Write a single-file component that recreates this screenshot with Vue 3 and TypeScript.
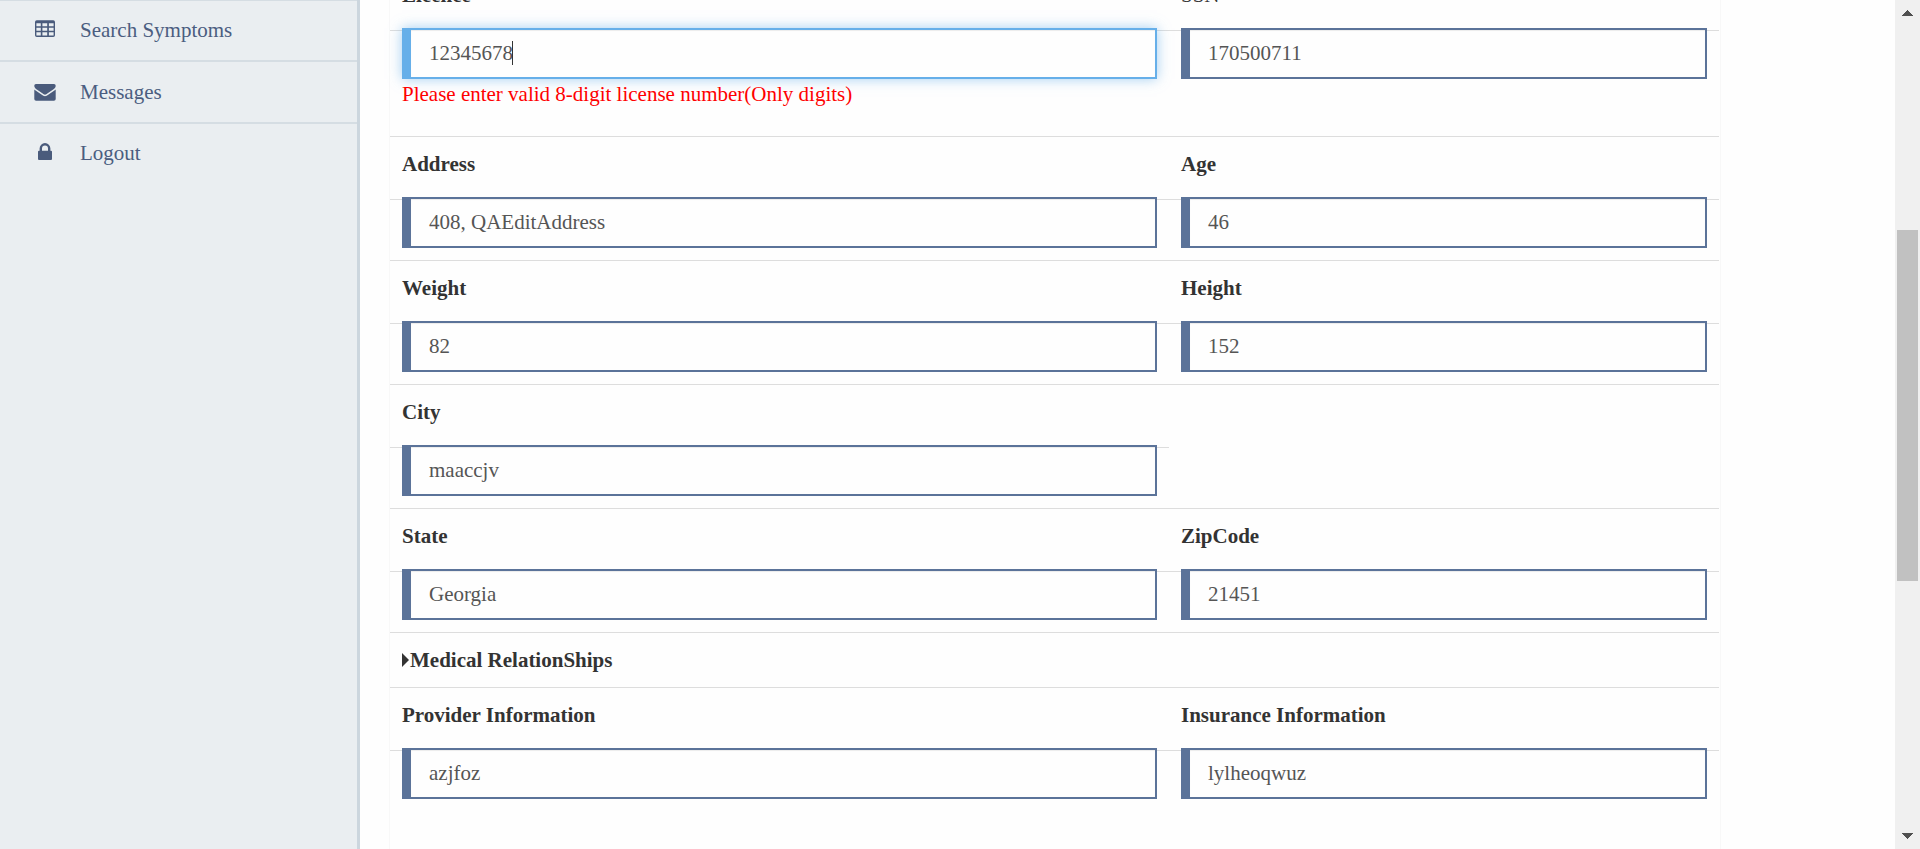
<script setup lang="ts">
interface Field {
  label: string
  value: string
  light?: boolean
  active?: boolean
  error?: string
}

interface Row {
  id: string
  fields: Field[]
  heading?: string
}

const rows: Row[] = [
  {
    id: 'licence',
    fields: [
      {
        label: 'Licence',
        value: '12345678',
        active: true,
        error: 'Please enter valid 8-digit license number(Only digits)',
      },
      { label: 'SSN', value: '170500711', light: true },
    ],
  },
  { id: 'address', fields: [{ label: 'Address', value: '408, QAEditAddress' }, { label: 'Age', value: '46' }] },
  { id: 'weight', fields: [{ label: 'Weight', value: '82' }, { label: 'Height', value: '152' }] },
  { id: 'city', fields: [{ label: 'City', value: 'maaccjv' }] },
  { id: 'state', fields: [{ label: 'State', value: 'Georgia' }, { label: 'ZipCode', value: '21451' }] },
  { id: 'medical', fields: [], heading: 'Medical RelationShips' },
  {
    id: 'provider',
    fields: [
      { label: 'Provider Information', value: 'azjfoz' },
      { label: 'Insurance Information', value: 'lylheoqwuz' },
    ],
  },
]
</script>

<template>
  <div class="page">
    <nav class="sidebar">
      <a class="item first">
        <svg class="icon" viewBox="0 0 22 20">
          <path
            fill-rule="evenodd"
            d="M2.800 1.300h16.400a1.800 1.800 0 0 1 1.800 1.800v13.200a1.800 1.800 0 0 1-1.800 1.800H2.800A1.800 1.800 0 0 1 1 16.300V3.100a1.800 1.800 0 0 1 1.800-1.800zM2.400 4.300v2.900h4.400V4.300zM8.400 4.300v2.900h4.800V4.300zM14.900 4.300v2.900h4.700V4.300zM2.400 8.700v3h4.400v-3zM8.400 8.700v3h4.800v-3zM14.900 8.700v3h4.700v-3zM2.400 13.200v3.400h4.400v-3.400zM8.400 13.200v3.400h4.800v-3.400zM14.900 13.200v3.400h4.700v-3.400z"
          />
        </svg>
        <span>Search Symptoms</span>
      </a>
      <a class="item">
        <svg class="icon" viewBox="0 -1 22 20">
          <path d="M2 2h18a1.700 1.700 0 0 1 1.700 1.700c0 1.600-1.200 2.900-2.500 3.800l-5.900 4.100c-.7.5-1.500 1.100-2.300 1.100s-1.600-.6-2.300-1.100L2.800 7.500C1.700 6.700.3 5.200.3 3.900.3 2.800.9 2 2 2z" />
          <path d="M.3 7.400c.4.4.8.8 1.300 1.100l6.200 4.300c1 .7 2 1.400 3.200 1.400s2.200-.7 3.200-1.400l6.200-4.300c.5-.3.9-.7 1.300-1.100v9.600a1.800 1.800 0 0 1-1.800 1.800H2.100A1.800 1.800 0 0 1 .3 17z" />
        </svg>
        <span>Messages</span>
      </a>
      <a class="item last">
        <svg class="icon" viewBox="0 0 22 20">
          <path
            fill-rule="evenodd"
            d="M5.600 8.800V6.500a5.400 5.400 0 0 1 10.800 0v2.300h.6q1 0 1 1v7.200q0 1-1 1H5q-1 0-1-1V9.800q0-1 1-1zM8 8.800h6V6.500a3 3 0 0 0-6 0z"
          />
        </svg>
        <span>Logout</span>
      </a>
    </nav>

    <main class="content">
      <div class="sheet">
        <template v-for="row in rows" :key="row.id">
          <div v-if="row.heading" class="heading"><i class="caret-right"></i>{{ row.heading }}</div>
          <template v-else>
            <div class="row labels">
              <div v-for="f in row.fields" :key="f.label" class="label" :class="{ light: f.light }">{{ f.label }}</div>
            </div>
            <div class="row inputs" :class="{ tall: row.fields.some((f) => f.error) }">
              <div v-for="f in row.fields" :key="f.label" class="cell">
                <div class="field" :class="{ active: f.active }">
                  <span>{{ f.value }}</span><i v-if="f.active" class="cursor"></i>
                </div>
                <div v-if="f.error" class="error">{{ f.error }}</div>
              </div>
            </div>
          </template>
        </template>
      </div>
    </main>

    <div class="scrollbar">
      <svg class="arrow" viewBox="0 0 11 6" shape-rendering="crispEdges"><path d="M5 0h1v1h1v1h1v1h1v1h1v1h1v1H0V5h1V4h1V3h1V2h1V1h1z" /></svg>
      <div class="thumb"></div>
      <svg class="arrow down" viewBox="0 0 11 6" shape-rendering="crispEdges"><path d="M5 0h1v1h1v1h1v1h1v1h1v1h1v1H0V5h1V4h1V3h1V2h1V1h1z" /></svg>
    </div>
  </div>
</template>

<style>
body {
  overflow: hidden;
}
</style>

<style scoped>
.page {
  display: flex;
  width: 1920px;
  height: 849px;
  overflow: hidden;
  background: #fefefe;
  color: #333;
  font: 21px/30px 'Liberation Serif', 'Times New Roman', serif;
}
.page * {
  box-sizing: border-box;
}
.sidebar {
  width: 360px;
  flex: none;
  background: #eaeef1;
  border-right: 3px solid #ccd6de;
}
.item {
  display: flex;
  align-items: center;
  height: 62px;
  padding-left: 34px;
  border-bottom: 2px solid #d5dde3;
  color: #4b5d80;
}
.item.first {
  padding-bottom: 1px;
  border-top: 1px solid #d5dde3;
}
.item.last {
  height: 58px;
  border-bottom: 0;
}
.icon {
  width: 22px;
  height: 20px;
  margin: 0 24px 2px 0;
  fill: #4a5b7c;
}
.content {
  flex: 1;
  padding-left: 29px;
}
.sheet {
  width: 1332px;
  height: 882px;
  margin-top: -33px;
  padding-right: 1px;
  border-left: 1px solid #f8f8f8;
  border-right: 1px solid #f8f8f8;
}
.row {
  display: grid;
  grid-template-columns: 779px 550px;
}
.labels {
  height: 63px;
  border-top: 1px solid #ddd;
  width: 1329px;
}
.label {
  padding: 12px 12px 0;
  font-weight: 700;
}
.label.light {
  font-weight: 400;
}
.inputs {
  height: 61px;
}
.inputs.tall {
  height: 106px;
}
.cell {
  padding: 0 12px;
  border-top: 1px solid #ddd;
}
.field {
  display: flex;
  align-items: center;
  height: 51px;
  margin-top: -3px;
  padding: 0 0 2px 18px;
  background: #fefefe;
  border: 2px solid #5b7399;
  border-left-width: 9px;
  box-shadow: inset 0 1px 1px rgba(0, 0, 0, 0.075);
  color: #555;
}
.field.active {
  border-color: #66afe9;
  box-shadow:
    inset 0 1px 1px rgba(0, 0, 0, 0.075),
    0 0 12px rgba(102, 175, 233, 0.6);
}
.cursor {
  width: 1px;
  height: 24px;
  margin-left: -1px;
  background: #333;
}
.error {
  color: #f00;
}
.heading {
  display: flex;
  align-items: center;
  width: 1329px;
  height: 55px;
  padding-left: 12px;
  border-top: 1px solid #ddd;
  font-weight: 700;
}
.caret-right {
  margin-right: 1px;
  border: 7px solid transparent;
  border-left: 7px solid #333;
  border-right: 0;
}
.scrollbar {
  display: flex;
  flex-direction: column;
  align-items: center;
  width: 25px;
  padding: 10px 0;
  background: #f0f0f0;
}
.arrow {
  width: 11px;
  height: 6px;
  fill: #505050;
}
.arrow.down {
  margin-top: auto;
  transform: rotate(180deg);
}
.thumb {
  width: 21px;
  height: 351px;
  margin-top: 214px;
  background: #c1c1c1;
}
</style>
